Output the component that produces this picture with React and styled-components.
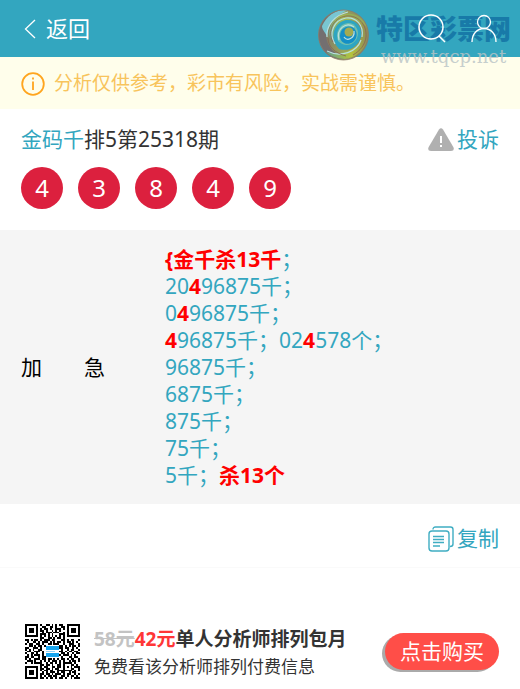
import styled, { createGlobalStyle } from 'styled-components';

const balls = [4, 3, 8, 4, 9];

const picks = [
  [{ text: '{金千杀13千', hit: true }, { text: '；' }],
  [{ text: '20' }, { text: '4', hit: true }, { text: '96875千；' }],
  [{ text: '0' }, { text: '4', hit: true }, { text: '96875千；' }],
  [{ text: '4', hit: true }, { text: '96875千；02' }, { text: '4', hit: true }, { text: '578个；' }],
  [{ text: '96875千；' }],
  [{ text: '6875千；' }],
  [{ text: '875千；' }],
  [{ text: '75千；' }],
  [{ text: '5千；' }, { text: '杀13个', hit: true }],
];

const qrRows = [
  '#######.#..##.#.#.##..#######',
  '#.....#..##..##.#..##.#.....#',
  '#.###.#.#.##.#..###.#.#.###.#',
  '#.###.#.##.#..#.#.#...#.###.#',
  '#.###.#..#.###.###..#.#.###.#',
  '#.....#.###.#.#...###.#.....#',
  '#######.#.#.#.#.#.#.#.#######',
  '........##..##.#.##.#........',
  '##.#.##.#.###.##...##.#.##..#',
  '.#..##.#.###.#.#.##.#.##.#.#.',
  '#.##..##.#..##.###..#..###..#',
  '..##.#.##.#.....#.##.#.#.##.#',
  '##..###.#.........##.##..#.#.',
  '#.#.#..##..........#..#.##..#',
  '.##..###.#........##.#.##.##.',
  '#..##.#..#.........##.#..#.##',
  '.#.#.###.#........#.###.#.#..',
  '##.##..#.##.....##.#...##.##.',
  '#.#..###.##.##.#.#.##.#.##..#',
  '.###.#..#.#.#.###.#.#..#.##.#',
  '#..#.####..#.##.#.#.#####.#..',
  '........##.##.#..##.#...##.#.',
  '#######.#.##..##.##.#.#.#.###',
  '#.....#.##.##.#.##..#...##..#',
  '#.###.#.#.##.##..########.#.#',
  '#.###.#..#.#.###.#.##..#.##..',
  '#.###.#.##.##.#.###.#.##..#.#',
  '#.....#.#.#.##.##..##.#.##.#.',
  '#######.##.#.##.#.##.#..#.###',
];

const QrCode = () => (
  <QrImage viewBox='0 0 29 29' role='img' aria-label='二维码' shapeRendering='crispEdges'>
    {qrRows.map((row, y) =>
      [...row].map((cell, x) =>
        cell === '#' ? <rect key={`${x}-${y}`} x={x} y={y} width='1' height='1' fill='#000' /> : null
      )
    )}
    <rect x='11' y='11' width='7' height='7' fill='#fff' />
    <rect x='11' y='11.5' width='7' height='2' fill='#18a5ee' />
    <rect x='11' y='14' width='5' height='1' fill='#8ed3f7' />
    <rect x='11' y='15.5' width='7' height='2' fill='#18a5ee' />
  </QrImage>
);

const SwirlLogo = () => (
  <svg width='52' height='52' viewBox='0 0 52 52' aria-hidden='true'>
    <defs>
      <linearGradient id='base' x1='0' y1='0.5' x2='1' y2='0.5'>
        <stop offset='0' stopColor='#75706c' />
        <stop offset='0.5' stopColor='#9aa45a' />
        <stop offset='1' stopColor='#80795f' />
      </linearGradient>
      <linearGradient id='lime' x1='0' y1='1' x2='1' y2='0'>
        <stop offset='0' stopColor='#5fa9a5' />
        <stop offset='0.6' stopColor='#a3bb52' />
        <stop offset='1' stopColor='#8a9a5a' />
      </linearGradient>
      <linearGradient id='tail' x1='0' y1='0' x2='1' y2='0'>
        <stop offset='0' stopColor='#5f9f8e' />
        <stop offset='0.6' stopColor='#b5c33c' />
        <stop offset='1' stopColor='#8b8a58' />
      </linearGradient>
    </defs>
    <circle cx='25.5' cy='26' r='25' fill='url(#base)' />
    <path d='M1 28C1 12 12 1 27 1C16 7 8 15 8 27C9 38 17 46 30 50C13 52 1 42 1 28Z' fill='#736f70' />
    <path d='M4 17C9 6 18 0 30 1C19 6 10 13 9 27C6 22 4 20 4 17Z' fill='#79c6d2' />
    <path d='M12 19C16 6 30 1 42 8C47 12 50 18 50 25C44 13 33 8 24 13C17 17 14 25 17 34C12 30 10 25 12 19Z' fill='url(#lime)' />
    <path d='M50 22C51 37 41 48 27 50C20 50 12 47 8 43C24 47 39 41 43 29C45 22 44 16 40 12C46 14 49 17 50 22Z' fill='url(#tail)' />
    <path d='M17 34C13 24 18 13 28 11C38 10 45 18 43 28C40 38 31 43 21 40C20 38 18 37 17 34Z' fill='#2ea5c2' />
    <path d='M20 32C17 24 21 15 30 14C38 14 42 22 39 29C36 36 27 39 20 32Z' fill='#6fbfb0' />
    <path d='M22 27C22 20 28 16 34 18C40 21 40 29 35 33C29 37 22 34 22 27Z' fill='#148fc6' />
    <circle cx='31' cy='23' r='4.5' fill='#a2aa50' />
    <path
      d='M9 28C8 16 17 6 30 3M17 35C10 24 16 11 28 9C38 8 46 16 44 28M21 31C18 20 28 12 36 18M9 42C23 49 39 43 43 31M26 28C29 33 37 29 36 22'
      fill='none'
      stroke='#b9dfe0'
      strokeWidth='1.2'
    />
    <path
      d='M10 29C10 38 17 44 28 47M15 33C9 22 15 9 28 7C40 6 49 15 48 28C47 36 42 42 35 46'
      fill='none'
      stroke='#8a5f56'
      strokeWidth='0.8'
    />
    <circle cx='25.5' cy='26' r='25' fill='none' stroke='#8f7a68' strokeWidth='0.8' />
  </svg>
);

const App = () => {
  return (
    <>
      <GlobalStyle />
      <Header>
        <BackLink href='#back'>
          <svg width='12' height='20' viewBox='0 0 12 20' fill='none' stroke='#fff' strokeWidth='1.3'>
            <path d='M11 1L1.5 10L11 19' />
          </svg>
          返回
        </BackLink>
        <HeaderActions>
          <IconButton aria-label='搜索'>
            <svg width='28' height='30' viewBox='0 0 28 30' fill='none' stroke='#fff' strokeWidth='1.5'>
              <circle cx='13' cy='13' r='12' />
              <path d='M21 22L27 28' />
            </svg>
          </IconButton>
          <IconButton aria-label='我的'>
            <svg width='28' height='30' viewBox='0 0 28 30' fill='none' stroke='#fff' strokeWidth='1.3'>
              <circle cx='14' cy='8' r='6.5' />
              <path d='M2 28C2 20 7 14.5 14 14.5S26 20 26 28' />
            </svg>
          </IconButton>
        </HeaderActions>
        <Watermark>
          <SwirlLogo />
          <WatermarkText>
            <strong>特区彩票网</strong>
            <span>www.tqcp.net</span>
          </WatermarkText>
        </Watermark>
      </Header>
      <Notice>
        <svg width='24' height='24' viewBox='0 0 24 24' fill='none' stroke='#ffa51f' strokeWidth='1.8'>
          <circle cx='12' cy='12' r='10.8' />
          <path d='M12 9.5V18M12 5.5V7.5' />
        </svg>
        分析仅供参考，彩市有风险，实战需谨慎。
      </Notice>
      <main>
        <Issue>
          <IssueTop>
            <IssueTitle>
              <a href='#expert'>金码千</a>排5第25318期
            </IssueTitle>
            <TextButton>
              <svg width='26' height='23' viewBox='0 0 26 23'>
                <path d='M11 1.5Q13-1 15 1.5L25.3 19Q27 22.7 23 23H3Q-1 22.7 .7 19Z' fill='#b0b0b0' />
                <path d='M13 8V15M13 17V19' stroke='#fff' strokeWidth='2' />
              </svg>
              投诉
            </TextButton>
          </IssueTop>
          <Balls>
            {balls.map((ball, index) => (
              <Ball key={index}>{ball}</Ball>
            ))}
          </Balls>
        </Issue>
        <Analysis>
          <AnalysisTitle>
            <span>加</span>
            <span>急</span>
          </AnalysisTitle>
          <div>
            {picks.map((line, index) => (
              <PickLine key={index}>
                {line.map((part, i) => (part.hit ? <Hit key={i}>{part.text}</Hit> : part.text))}
              </PickLine>
            ))}
          </div>
        </Analysis>
        <CopyBar>
          <TextButton>
            <svg width='26' height='26' viewBox='0 0 26 26' fill='none' stroke='#3fadc2' strokeWidth='1.4'>
              <path d='M5 3.5Q5 1 7.5 1H22.5Q25 1 25 3.5V18Q25 20.5 22 20.5' />
              <rect x='1' y='5' width='20' height='20' rx='3' />
              <path d='M5 10.5H16M5 13.5H16M5 16.5H16M5 20H12' strokeWidth='1.6' />
            </svg>
            复制
          </TextButton>
        </CopyBar>
      </main>
      <Footer>
        <QrCode />
        <Offer>
          <OfferTitle>
            <del>58元</del>
            <em>42元</em>单人分析师排列包月
          </OfferTitle>
          <p>免费看该分析师排列付费信息</p>
        </Offer>
        <BuyButton>点击购买</BuyButton>
      </Footer>
    </>
  );
};

export default App;

const GlobalStyle = createGlobalStyle`
  * {
    box-sizing: border-box;
  }

  body {
    margin: 0;
    background: #fff;
    color: #333;
    font-family: 'Noto Sans', 'Noto Sans CJK SC', sans-serif;
    font-size: 21px;
    line-height: 27px;
  }

  h1, h2, p {
    margin: 0;
  }

  a {
    color: #33a6bf;
    text-decoration: none;
  }

  button {
    padding: 0;
    border: none;
    background: transparent;
    font: inherit;
    cursor: pointer;
  }

  svg {
    display: block;
    flex: none;
  }
`;

const Header = styled.header`
  position: relative;
  display: flex;
  align-items: center;
  justify-content: space-between;
  height: 57px;
  padding: 0 22px 0 24px;
  background: #33a6bf;
`;

const BackLink = styled.a`
  display: flex;
  align-items: center;
  gap: 10px;
  color: #fff;
  font-size: 22px;
`;

const HeaderActions = styled.div`
  position: relative;
  z-index: 1;
  display: flex;
  gap: 24px;
`;

const IconButton = styled.button`
  display: flex;
`;

const Watermark = styled.div`
  position: absolute;
  top: 9px;
  right: 9px;
  display: flex;
  gap: 6px;
  pointer-events: none;
`;

const WatermarkText = styled.div`
  display: flex;
  flex-direction: column;
  padding-top: 7px;

  & strong {
    color: #1676a6;
    font-family: 'Liberation Sans', 'Noto Sans CJK SC', sans-serif;
    font-size: 27px;
    font-weight: 900;
    line-height: 28px;
    opacity: 0.9;
  }

  & span {
    color: #b9c4c6;
    font-family: 'DejaVu Serif', serif;
    font-size: 18px;
    line-height: 26px;
    opacity: 0.8;
    text-align: center;
  }
`;

const Notice = styled.div`
  display: flex;
  align-items: center;
  gap: 9px;
  height: 52px;
  padding: 1px 21px 0;
  background: #fffeeb;
  color: #f8c45c;
  font-size: 19px;
`;

const Issue = styled.section`
  padding: 17px 21px 21px;
`;

const IssueTop = styled.div`
  display: flex;
  align-items: center;
  justify-content: space-between;
`;

const IssueTitle = styled.h1`
  font-size: 21px;
  font-weight: normal;
`;

const TextButton = styled.button`
  display: flex;
  align-items: center;
  gap: 3px;
  color: #33a6bf;
`;

const Balls = styled.div`
  display: flex;
  gap: 15px;
  margin-top: 14px;
`;

const Ball = styled.span`
  width: 42px;
  height: 42px;
  border-radius: 50%;
  background: #dc203e;
  color: #fff;
  font-size: 24px;
  line-height: 42px;
  text-align: center;
`;

const Analysis = styled.section`
  display: flex;
  align-items: center;
  gap: 60px;
  padding: 16px 21px 15px;
  background: #f5f5f5;
  color: #33a6bf;
`;

const AnalysisTitle = styled.h2`
  display: flex;
  justify-content: space-between;
  width: 84px;
  color: #000;
  font-size: 21px;
  font-weight: normal;
`;

const PickLine = styled.p`
  line-height: 27px;
`;

const Hit = styled.b`
  color: #f00;
`;

const CopyBar = styled.div`
  display: flex;
  justify-content: flex-end;
  padding: 21px 21px 15px;
  border-bottom: 1px solid #fafafa;
`;

const Footer = styled.footer`
  display: flex;
  align-items: center;
  padding: 53px 21px 8px 25px;
`;

const QrImage = styled.svg`
  width: 55px;
  height: 55px;
`;

const Offer = styled.div`
  flex: 1;
  padding: 4px 0 0 14px;
  color: #333;
  font-size: 17px;
  line-height: 28px;
`;

const OfferTitle = styled.h2`
  font-size: 19px;
  font-weight: bold;

  & del {
    color: #c3c3c3;
  }

  & em {
    color: #ff3636;
    font-style: normal;
  }
`;

const BuyButton = styled.button`
  height: 37px;
  padding: 0 15px;
  border-radius: 19px;
  background: #ff4e48;
  box-shadow: -3px 2px 0 #aaa;
  color: #fff;
`;
